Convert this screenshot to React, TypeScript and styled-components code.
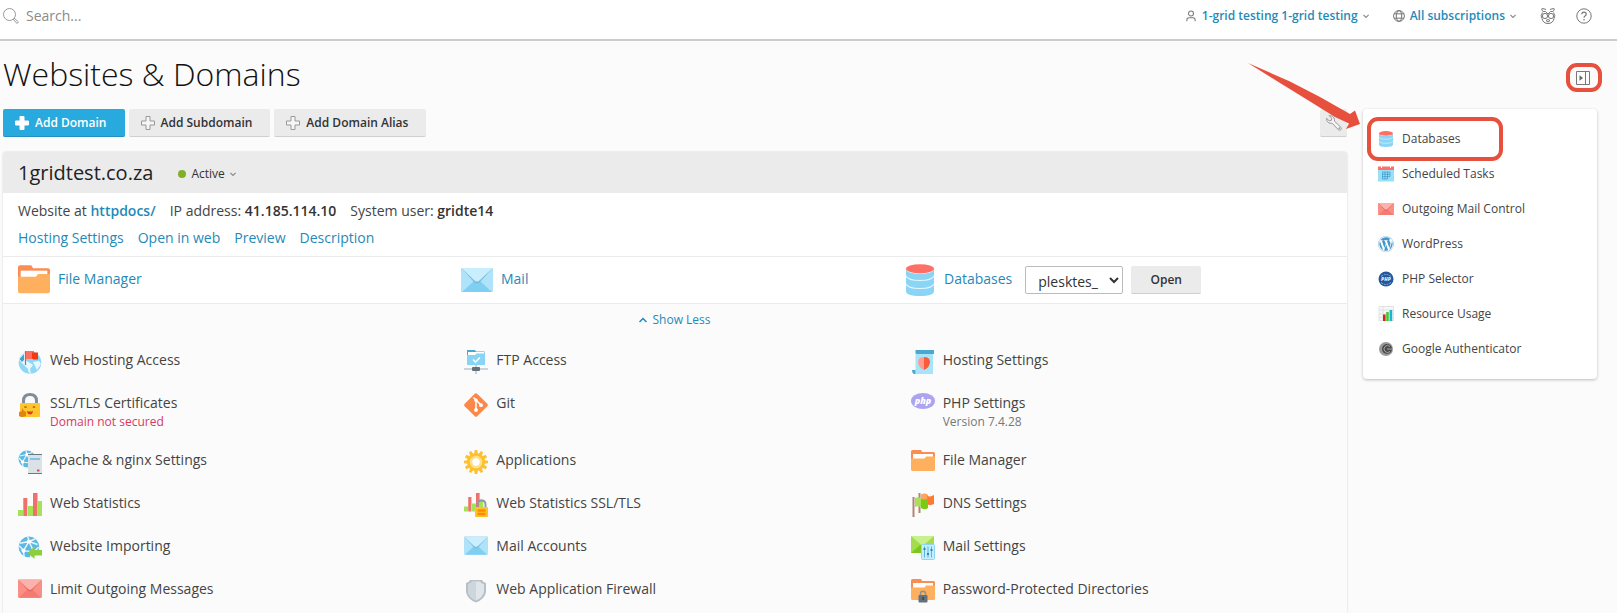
import React from "react";
import styled, { createGlobalStyle } from "styled-components";
import { FaWordpress } from "react-icons/fa";

const GlobalStyle = createGlobalStyle`
  * { box-sizing: border-box; }
  body {
    margin: 0;
    background: #fbfbfb;
    color: #444;
    font: 14px/20px "Open Sans", "Noto Sans", sans-serif;
  }
  button, input, select { font-family: inherit; }
  svg { display: block; flex: none; }
`;

const LINK = "#1f8ab8";
const RED = "#e6503c";

/* ---------- layout ---------- */

const Page = styled.div`
  display: flex;
  flex-direction: column;
  min-height: 100vh;
  overflow: hidden;
`;

const TopBar = styled.header`
  display: flex;
  align-items: center;
  justify-content: space-between;
  height: 41px;
  padding: 0 25px 8px 3px;
  background: #fff;
  border-bottom: 2px solid #ccc;
`;

const Search = styled.label`
  display: flex;
  align-items: center;
  gap: 7px;
`;

const SearchInput = styled.input`
  width: 200px;
  height: 24px;
  padding: 0;
  border: 0;
  outline: 0;
  background: transparent;
  font-size: 14px;
  color: #444;
  &::placeholder { color: #8a8a8a; opacity: 1; }
`;

const TopMenu = styled.nav`
  display: flex;
  align-items: center;
  gap: 24px;
`;

const TopLink = styled.a`
  display: flex;
  align-items: center;
  gap: 5px;
  color: ${LINK};
  font-size: 12px;
  font-weight: 600;
  text-decoration: none;
`;

const TopTools = styled.div`
  display: flex;
  gap: 20px;
`;

const PlainButton = styled.button`
  display: flex;
  align-items: center;
  justify-content: center;
  padding: 0;
  border: 0;
  background: transparent;
  cursor: pointer;
`;

const Content = styled.div`
  display: flex;
  flex: 1;
  flex-direction: column;
  padding: 0 20px 0 3px;
`;

const TitleRow = styled.div`
  display: flex;
  align-items: flex-start;
  justify-content: space-between;
  height: 68px;
  padding-top: 11px;
`;

const Title = styled.h1`
  margin: 0;
  color: #111;
  font-size: 32px;
  font-weight: 300;
  line-height: 44px;
`;

const ToggleWrap = styled.div`
  position: relative;
  padding-top: 12px;
`;

const ToggleButton = styled(PlainButton)`
  width: 28px;
  height: 28px;
`;

const Columns = styled.div`
  display: grid;
  flex: 1;
  grid-template-columns: minmax(0, 1fr) 234px;
  gap: 16px;
`;

const Main = styled.main`
  display: flex;
  flex-direction: column;
  gap: 15px;
`;

const Toolbar = styled.div`
  display: flex;
  gap: 4px;
`;

const ToolButton = styled.button<{ $primary?: boolean }>`
  display: flex;
  align-items: center;
  gap: 5px;
  height: 28px;
  padding: 0 18px 0 11px;
  border: 0;
  border-bottom: 1px solid ${(p) => (p.$primary ? "#2391bf" : "#cfcfcf")};
  border-radius: 2px;
  background: ${(p) => (p.$primary ? "#28aade" : "#ebebeb")};
  color: ${(p) => (p.$primary ? "#fff" : "#333")};
  font-size: 12px;
  font-weight: 600;
  cursor: pointer;
`;

const WrenchButton = styled(ToolButton)`
  width: 27px;
  margin-left: auto;
  padding: 0;
  justify-content: center;
`;

const Panel = styled.section`
  flex: 1;
  border-radius: 3px 3px 0 0;
  background: #fbfbfb;
  box-shadow: 0 0 2px rgba(0, 0, 0, 0.2);
`;

const PanelHead = styled.div`
  display: flex;
  align-items: center;
  gap: 25px;
  height: 41px;
  padding: 0 15px;
  border-radius: 3px 3px 0 0;
  background: #ebebeb;
`;

const DomainName = styled.h2`
  margin: 0;
  color: #222;
  font-size: 20px;
  font-weight: 500;
  line-height: 28px;
`;

const Status = styled(PlainButton)`
  gap: 5px;
  padding-top: 2px;
  color: #333;
  font-size: 12px;
  font-weight: 500;
`;

const Dot = styled.span`
  width: 8px;
  height: 8px;
  border-radius: 50%;
  background: #7fb02a;
`;

const Info = styled.div`
  display: flex;
  flex-direction: column;
  gap: 7px;
  padding: 8px 15px;
  border-bottom: 1px solid #ebebeb;
  background: #fff;
`;

const InfoRow = styled.div`
  display: flex;
  gap: 14px;
  strong { color: #333; font-weight: 600; }
`;

const Link = styled.a<{ $strong?: boolean }>`
  color: ${LINK};
  font-weight: ${(p) => (p.$strong ? 600 : 400)};
  text-decoration: none;
`;

const Shortcuts = styled.div`
  display: grid;
  grid-template-columns: repeat(3, minmax(0, 1fr));
  column-gap: 15px;
  align-items: center;
  height: 47px;
  padding: 0 15px;
  border-bottom: 1px solid #ebebeb;
  background: #fff;
`;

const Shortcut = styled.div`
  display: flex;
  align-items: center;
  gap: 8px;
  ${Link} { padding-bottom: 2px; }
`;

const DbSelect = styled.select`
  width: 98px;
  height: 28px;
  margin-left: 5px;
  padding: 2px 0 0 8px;
  border: 1px solid #bbb;
  border-radius: 2px;
  background-color: #fff;
  color: #333;
  font-size: 14px;
`;

const OpenButton = styled(ToolButton)`
  width: 70px;
  padding: 0;
  justify-content: center;
`;

const ShowLess = styled(PlainButton)`
  gap: 5px;
  width: 100%;
  padding: 6px 0 20px;
  color: ${LINK};
  font-size: 12px;
  line-height: 20px;
`;

const Tools = styled.div`
  display: grid;
  grid-template-columns: repeat(3, minmax(0, 1fr));
  gap: 19px 25px;
  padding: 0 15px;
`;

const Tool = styled.a`
  display: flex;
  align-items: flex-start;
  gap: 8px;
  min-height: 24px;
  color: #444;
  text-decoration: none;
`;

const Note = styled.small<{ $warn?: boolean }>`
  display: block;
  color: ${(p) => (p.$warn ? "#d9385f" : "#777")};
  font-size: 12px;
  line-height: 18px;
`;

const Side = styled.aside`
  position: relative;
  align-self: start;
  padding: 12px 15px 13px;
  border-radius: 4px;
  background: #fff;
  box-shadow: 0 1px 3px rgba(0, 0, 0, 0.25);
`;

const SideLink = styled.a`
  display: flex;
  align-items: center;
  gap: 8px;
  height: 35px;
  color: #444;
  font-size: 12px;
  text-decoration: none;
`;

const Ring = styled.span`
  position: absolute;
  border: 4px solid ${RED};
  border-radius: 11px;
  pointer-events: none;
`;

const ToggleRing = styled(Ring)`
  inset: 11px -5px 0 -3px;
`;

const DatabaseRing = styled(Ring)`
  top: 8px;
  left: 4px;
  width: 136px;
  height: 44px;
`;

const ArrowSvg = styled.svg`
  position: absolute;
  top: -46px;
  left: -115px;
  pointer-events: none;
`;

/* ---------- icons ---------- */

const Chevron = ({ up, color = "#888", size = 6 }: { up?: boolean; color?: string; size?: number }) => (
  <svg width={size} height={size} viewBox="0 0 8 8" fill="none" stroke={color} strokeWidth="1.5">
    <path d={up ? "M.5 6 4 2.500 7.500 6" : "M.5 2.500 4 6 7.500 2.500"} />
  </svg>
);

const Plus = ({ solid }: { solid?: boolean }) => (
  <svg width="16" height="16" viewBox="0 0 16 16" fill={solid ? "#fff" : "#f6f6f6"} stroke={solid ? "#fff" : "#999"}>
    <path d="M6 1.500h4V6h4.500v4H10v4.500H6V10H1.500V6H6z" />
  </svg>
);

const SearchIcon = () => (
  <svg width="16" height="16" viewBox="0 0 16 16" fill="none" stroke="#999">
    <circle cx="6.500" cy="6.500" r="6" />
    <path d="m11 10 4.500 4-1.500 1.500-4-4.500" />
  </svg>
);

const UserIcon = () => (
  <svg width="12" height="12" viewBox="0 0 12 14" fill="none" stroke="#777" strokeWidth="1.200">
    <circle cx="6" cy="4" r="2.900" />
    <path d="M1.200 13v-1.500q0-2.500 2.500-2.500h4.600q2.500 0 2.500 2.500V13" />
  </svg>
);

const GlobeIcon = () => (
  <svg width="12" height="12" viewBox="0 0 12 12" fill="none" stroke="#777">
    <circle cx="6" cy="6" r="5.400" />
    <ellipse cx="6" cy="6" rx="2.700" ry="5.400" />
    <path d="M1 3.800h10M1 8.200h10" />
  </svg>
);

const MascotIcon = () => (
  <svg width="16" height="16" viewBox="0 0 16 16" fill="none" stroke="#777">
    <path d="M6 1.500Q2 0 1.800.8q-.3 2 1.400 2.700h2.300L8 6l2.500-2.500h2.300q1.700-.7 1.400-2.700Q14 0 10 1.500" />
    <path d="M2.500 4.500Q0 8 2 10.500q1 5 6 5t6-5q2-2.500-.5-6" />
    <circle cx="5" cy="8" r="2.600" />
    <circle cx="11" cy="8" r="2.600" />
    <path d="M6 12.500q2-2 4 0l-2 1.500z" />
  </svg>
);

const HelpIcon = () => (
  <svg width="16" height="16" viewBox="0 0 16 16" fill="none" stroke="#777">
    <circle cx="8" cy="8" r="7.200" />
    <path d="M5.800 6.300q0-2.200 2.200-2.200t2.200 2Q10.200 7.300 9 8q-1 .6-1 1.700M8 11v1.400" strokeWidth="1.200" />
  </svg>
);

const SidebarIcon = () => (
  <svg width="14" height="14" viewBox="0 0 14 14" fill="none" stroke="#777">
    <path d="M.5.5h13v13H.5zM9.500.5v13" />
    <path d="M3.500 4.300 7 7 3.500 9.700z" fill="#666" stroke="none" />
  </svg>
);

const WrenchIcon = () => (
  <svg width="16" height="16" viewBox="0 0 16 16" fill="#f4f4f4" stroke="#999">
    <path d="M3.200.7 5.700 3.200 5.300 5.400 3.200 5.800.6 3.300C.2 6 2 8.300 4.800 8.300h1.400l6.300 6.600c1.600 1.200 3.700-.7 2.500-2.500L8.500 6.200V4.800C8.300 2 6 .3 3.200.7z" />
    <circle cx="13.300" cy="13.300" r=".6" />
  </svg>
);

type IconProps = { size?: number };

const Folder = ({ size = 24, locked }: IconProps & { locked?: boolean }) => (
  <svg width={size} height={size} viewBox={size > 24 ? "0 -1 24 24" : "0 0 24 24"}>
    <path d="M0 1.500Q0 0 1.500 0h8q1 0 1.300 1.200l.4.900H22.500Q24 2.100 24 3.600V10H0z" fill="#fb8c53" />
    <path d="M2 4h20v5H2z" fill="#fff" />
    <path d="M0 8.500h13.500l1.500-2h9v13q0 1.500-1.500 1.500h-21Q0 21 0 19.500z" fill="#ffb05e" />
    {locked && (
      <g>
        <path d="M9.500 17v-2.200q0-2.500 2.500-2.500t2.500 2.500V17" fill="none" stroke="#8a9298" strokeWidth="1.500" />
        <rect x="7.500" y="16" width="9" height="7.500" rx="1" fill="#65717a" />
        <rect x="11.400" y="18" width="1.300" height="3" fill="#343c42" />
      </g>
    )}
  </svg>
);

const Envelope = ({ size = 24, red }: IconProps & { red?: boolean }) => (
  <svg width={size} height={size} viewBox={size === 24 ? "0 -1 32 32" : "0 -4 32 32"}>
    <rect width="32" height="24" rx="1" fill={red ? "#fa8f85" : "#aee3fa"} />
    <path d="M1 24 13 13h6l12 11z" fill={red ? "#f37b72" : "#7fcff2"} />
    <path d="M.5 0h31L19 14q-3 3-6 0z" fill={red ? "#e8635b" : "#79bcd9"} />
    <path d="M.5 0h31L19 12q-3 3-6 0z" fill={red ? "#fcb2ac" : "#c9eefe"} />
  </svg>
);

const Database = ({ size = 32 }: IconProps) => (
  <svg width={size} height={size} viewBox="0 0 32 32">
    <path d="M2 5v22q0 5 14 5t14-5V5z" fill="#8ad5f6" />
    <path d="M2 12q2 4.500 14 4.500T30 12M2 20q2 4.500 14 4.500T30 20" fill="none" stroke="#e2f6ff" strokeWidth="1.200" />
    <ellipse cx="16" cy="5" rx="14" ry="5" fill="#fff" />
    <ellipse cx="16" cy="4.800" rx="14" ry="4.600" fill="#ff6f66" />
  </svg>
);

const Web = () => (
  <g fill="none" stroke="#e6f6fd" strokeWidth="1.200">
    <circle cx="9" cy="9" r="8.500" fill="#5cb8e4" stroke="none" />
    <path d="M9 4.500 4.500 12 13 13zM9 4.500 8 .5M9 4.500l5-2M4.500 12 1 8M4.500 12 5 17M13 13l4-4M13 13l-3 4.500M1.500 6 9 4.500 16 7" />
    <g fill="#fff" stroke="none">
      <circle cx="9" cy="4.500" r="1.700" />
      <circle cx="4.500" cy="12" r="1.700" />
      <circle cx="13" cy="13" r="1.700" />
    </g>
  </g>
);

const HostingAccess = () => (
  <svg width="24" height="24" viewBox="0 0 24 24">
    <circle cx="12" cy="12.500" r="11.300" fill="#8ed7f7" />
    <path d="M1 10q2-6 7-8l1 5-2 3 5 3 3 2-3 4 1 5q-3-1-3-5l-4-4z" fill="#e9f8fe" />
    <path d="M1.500 9 6 4v6l-2 2z" fill="#4a9fc8" />
    <path d="m15 12 6-1 2 3-4 6-2-4z" fill="#e9f8fe" />
    <path d="M7.500 1v14" stroke="#a7705f" strokeWidth="1.200" />
    <path d="M8 1h8v8H8z" fill="#ff6f61" />
    <path d="M14 2.500h6V9.500h-5l-1-1.500z" fill="#f2390f" />
  </svg>
);

const Lock = () => (
  <svg width="24" height="24" viewBox="0 0 24 24">
    <path d="M5.500 11V8q0-6.500 6.500-6.500T18.500 8v3" fill="none" stroke="#7f8e99" strokeWidth="3" />
    <rect x="2" y="10" width="20" height="14" rx="1" fill="#ffc52b" />
    <path d="M6.500 14.500q1-1.500 2 0M15 14.500q1-1.500 2 0" fill="none" stroke="#7b4a12" strokeWidth="1.200" />
    <path d="M9 18q3 1 6 0-.5 3.500-3 3.500T9 18z" fill="#dc3c2a" />
    <path d="m4 15 2 3 2 1v4q-4 2-7 0v-4l3-1z" fill="#e08610" />
  </svg>
);

const Apache = () => (
  <svg width="24" height="24" viewBox="0 0 24 24">
    <Web />
    <rect x="10" y="4" width="14" height="20" fill="#dbe2e7" />
    <path d="M10 4.500h14M10 23.500h14" stroke="#6c7983" />
    <path d="M12 9h10" stroke="#52b2df" strokeWidth="1.300" />
    <path d="M19 20.500h2.500" stroke="#f0463c" strokeWidth="2" />
  </svg>
);

const Bars = ({ locked }: { locked?: boolean }) => (
  <svg width="24" height="24" viewBox="0 0 24 24">
    <g transform={locked ? "scale(.8)" : undefined}>
      <path d="M0 17h5v6H0zM10 13h5v10h-5zM20 8h4v15h-4z" fill="#a6e255" />
      <path d="M5.300 5h4v18h-4zM15 0h4.500v23H15z" fill="#ee716b" />
    </g>
    {locked && (
      <g>
        <path d="M13.500 15v-3.500q0-4 4-4t4 4V15" fill="none" stroke="#8b9ba5" strokeWidth="2" />
        <rect x="11" y="14" width="13" height="10" rx="1" fill="#ffc02b" />
        <path d="M13.500 17.500h8M13.500 21h8" stroke="#ff8a00" strokeWidth="2.600" />
      </g>
    )}
  </svg>
);

const Importing = () => (
  <svg width="24" height="24" viewBox="0 0 24 24">
    <g transform="scale(1.22)">
      <Web />
    </g>
    <path d="m10 16.500 6.500-6v3.500H24v5.500h-7.500v3.500z" fill="#8cce3c" />
  </svg>
);

const Ftp = () => (
  <svg width="24" height="24" viewBox="0 0 24 24">
    <path d="M3 0h8l1 1.500h8.500V6H3z" fill="#4ba7d2" />
    <path d="M4 2h16v4H4z" fill="#fff" />
    <path d="M3 5h8l1.500-1.500h8.500V15H3z" fill="#86d4f6" />
    <path d="m9 9.500 2.500 2.500L16 7.500" fill="none" stroke="#fff" strokeWidth="1.600" />
    <path d="M0 19h24M12 15v9" stroke="#bcc8cf" strokeWidth="1.600" />
    <rect x="8" y="17" width="8" height="4" rx="1" fill="#63727d" />
  </svg>
);

const Git = () => (
  <svg width="24" height="24" viewBox="0 0 24 24">
    <path d="M10.800.7q1.200-1 2.400 0L23.300 10.800q1 1.200 0 2.400L13.200 23.300q-1.200 1-2.400 0L.7 13.200q-1-1.200 0-2.400z" fill="#fb8849" />
    <path d="M9.500 4.500 12 7v10M12 7l5.500 5.500" fill="none" stroke="#fff" strokeWidth="1.500" />
    <circle cx="12" cy="7.200" r="1.700" fill="#fff" />
    <circle cx="12" cy="17" r="1.900" fill="#fff" />
    <circle cx="17" cy="12.200" r="1.900" fill="#fff" />
  </svg>
);

const Gear = () => (
  <svg width="24" height="24" viewBox="0 0 24 24">
    <g fill="#fdc02f">
      {Array.from({ length: 12 }, (_, i) => (
        <path key={i} d="m10.200 4 .5-4h2.600l.5 4z" transform={`rotate(${i * 30} 12 12)`} />
      ))}
      <circle cx="12" cy="12" r="9" />
    </g>
    <circle cx="12" cy="12" r="5" fill="#fff" stroke="#ffe18a" strokeWidth="2.600" />
  </svg>
);

const Shield = () => (
  <svg width="24" height="24" viewBox="0 0 24 24">
    <path d="M2 4q3-.5 4-3h12q1 2.500 4 3v9q-1 7-10 10.500Q3 20 2 13z" fill="#b7c0c6" />
    <path d="M4 5.300Q7 4.500 8 2.500h8q1 2 4 2.800v7.200q-1 6-8 9-7-3-8-9z" fill="#dfe5e9" />
    <path d="M12 2.500H8Q7 4.500 4 5.300v7.200q1 6 8 9z" fill="#cdd6db" />
  </svg>
);

const Scroll = () => (
  <svg width="24" height="24" viewBox="0 0 24 24">
    <path d="M4.500 2h17.500v22H4.500z" fill="#a6e4fb" />
    <path d="M4.500 0H23v4H5.500Q4 3 4.500 0zM1 20h3.500v4H3Q1 23 1 20z" fill="#4ba7cf" />
    <path d="M13 7Q7 7 7 12q0 5 6 8z" fill="#ff9c8e" />
    <path d="M13 7q6 0 6 5 0 5-6 8z" fill="#fb5b38" />
  </svg>
);

const Php = () => (
  <svg width="24" height="24" viewBox="0 0 24 24">
    <ellipse cx="12" cy="8" rx="12" ry="8" fill="#aca4ee" />
    <text x="12" y="10.500" textAnchor="middle" fontSize="9" fontWeight="800" fontStyle="italic" fill="#fff">
      php
    </text>
  </svg>
);

const Flags = () => (
  <svg width="24" height="24" viewBox="0 0 24 24">
    <path d="M8.500 0v20M2.500 4v20" stroke="#b28472" strokeWidth="2" />
    <path d="M10 1.500q4-2 7 .5v8h-7z" fill="#ffa45e" />
    <path d="M16 2.500q3 2 7-.5v9q-4 2-6 .5z" fill="#ff7a30" />
    <path d="M4 5q4-2 7 1v9q-3-3-7-1z" fill="#a8e05a" />
    <path d="M10 6q3 1 7-.5V15q-3 2.500-7 0z" fill="#7bcb16" />
  </svg>
);

const MailSettings = () => (
  <svg width="24" height="24" viewBox="0 0 24 24">
    <path d="M0 0h23v17H0z" fill="#a3dc4f" />
    <path d="M0 17 9 9h5l9 8z" fill="#7cc91c" />
    <path d="M0 0h23L11.500 10z" fill="#c8f08c" />
    <rect x="10.500" y="8.500" width="13" height="15" rx="1" fill="#c4edfd" stroke="#8fd6f5" />
    <path d="M13.500 10.500v11M17 10.500v11M20.500 10.500v11" stroke="#5fb4dc" />
    <path d="M12.500 13h2M16 18h2M19.500 14h2" stroke="#2f86b4" strokeWidth="1.800" />
  </svg>
);

const Calendar = () => (
  <svg width="16" height="16" viewBox="0 0 16 16">
    <path d="M0 1h16v14.500H0z" fill="#98dff8" />
    <path d="M0 .5h16V4H0z" fill="#ff6f66" />
    <path d="M3.500 0v2M12.500 0v2" stroke="#fff" />
    <path d="M4.500 6v7M7 6v7M9.500 6v7M12 6v4.500M4.500 6H12M4.500 8.300H12M4.500 10.600H12M4.500 13h5" fill="none" stroke="#3c96c4" strokeWidth=".7" />
  </svg>
);

const PhpSelector = () => (
  <svg width="16" height="16" viewBox="0 0 16 16">
    <circle cx="8" cy="8" r="7.500" fill="#25579c" />
    <path d="M3 5.500q5-4 10 0M3 11.500q5 4 10 0" fill="none" stroke="#89aed8" strokeDasharray="2 1" />
    <text x="8" y="10" textAnchor="middle" fontSize="5" fontWeight="800" fontStyle="italic" fill="#dbe7f6">
      PHP
    </text>
  </svg>
);

const Resource = () => (
  <svg width="16" height="16" viewBox="0 0 16 16">
    <path d="M1 .5h14.500v14H1zM1 4h14M1 8h14M1 11.500h14M5 0v15" fill="#f7f7f7" stroke="#e2e2e2" />
    <path d="M5 8.500h2.600V15H5z" fill="#dc2020" />
    <path d="M8.200 6h2.600v9H8.200z" fill="#45c832" />
    <path d="M11.600 4h2.600v11h-2.600z" fill="#18b4d4" />
  </svg>
);

const Authenticator = () => (
  <svg width="16" height="16" viewBox="0 0 16 16">
    <circle cx="8" cy="8" r="7" fill="#9a9a9a" />
    <circle cx="9" cy="8" r="5" fill="#4a4a4a" />
    <path d="M12 5.500a3.500 3.500 0 1 0 0 5M9 8h5.500" fill="none" stroke="#a9a9a9" />
  </svg>
);

/* ---------- data ---------- */

type ToolItem = { label: string; icon: React.ReactNode; note?: string; warn?: boolean };

const tools: ToolItem[] = [
  { label: "Web Hosting Access", icon: <HostingAccess /> },
  { label: "FTP Access", icon: <Ftp /> },
  { label: "Hosting Settings", icon: <Scroll /> },
  { label: "SSL/TLS Certificates", icon: <Lock />, note: "Domain not secured", warn: true },
  { label: "Git", icon: <Git /> },
  { label: "PHP Settings", icon: <Php />, note: "Version 7.4.28" },
  { label: "Apache & nginx Settings", icon: <Apache /> },
  { label: "Applications", icon: <Gear /> },
  { label: "File Manager", icon: <Folder /> },
  { label: "Web Statistics", icon: <Bars /> },
  { label: "Web Statistics SSL/TLS", icon: <Bars locked /> },
  { label: "DNS Settings", icon: <Flags /> },
  { label: "Website Importing", icon: <Importing /> },
  { label: "Mail Accounts", icon: <Envelope /> },
  { label: "Mail Settings", icon: <MailSettings /> },
  { label: "Limit Outgoing Messages", icon: <Envelope red /> },
  { label: "Web Application Firewall", icon: <Shield /> },
  { label: "Password-Protected Directories", icon: <Folder locked /> },
];

const sideLinks: ToolItem[] = [
  { label: "Databases", icon: <Database size={16} /> },
  { label: "Scheduled Tasks", icon: <Calendar /> },
  { label: "Outgoing Mail Control", icon: <Envelope red size={16} /> },
  { label: "WordPress", icon: <FaWordpress size={16} color="#4698c6" /> },
  { label: "PHP Selector", icon: <PhpSelector /> },
  { label: "Resource Usage", icon: <Resource /> },
  { label: "Google Authenticator", icon: <Authenticator /> },
];

export default function App() {
  return (
    <Page>
      <GlobalStyle />
      <TopBar>
        <Search>
          <SearchIcon />
          <SearchInput type="text" placeholder="Search..." aria-label="Search" />
        </Search>
        <TopMenu>
          <TopLink href="#account">
            <UserIcon />
            1-grid testing 1-grid testing
            <Chevron />
          </TopLink>
          <TopLink href="#subscriptions">
            <GlobeIcon />
            All subscriptions
            <Chevron />
          </TopLink>
          <TopTools>
            <PlainButton aria-label="Advisor"><MascotIcon /></PlainButton>
            <PlainButton aria-label="Help"><HelpIcon /></PlainButton>
          </TopTools>
        </TopMenu>
      </TopBar>

      <Content>
        <TitleRow>
          <Title>Websites &amp; Domains</Title>
          <ToggleWrap>
            <ToggleButton aria-label="Toggle sidebar"><SidebarIcon /></ToggleButton>
            <ToggleRing />
          </ToggleWrap>
        </TitleRow>

        <Columns>
          <Main>
            <Toolbar>
              <ToolButton $primary><Plus solid />Add Domain</ToolButton>
              <ToolButton><Plus />Add Subdomain</ToolButton>
              <ToolButton><Plus />Add Domain Alias</ToolButton>
              <WrenchButton aria-label="Settings"><WrenchIcon /></WrenchButton>
            </Toolbar>

            <Panel>
              <PanelHead>
                <DomainName>1gridtest.co.za</DomainName>
                <Status><Dot />Active <Chevron /></Status>
              </PanelHead>
              <Info>
                <InfoRow>
                  <span>Website at <Link $strong href="#httpdocs">httpdocs/</Link></span>
                  <span>IP address: <strong>41.185.114.10</strong></span>
                  <span>System user: <strong>gridte14</strong></span>
                </InfoRow>
                <InfoRow>
                  <Link href="#hosting">Hosting Settings</Link>
                  <Link href="#open">Open in web</Link>
                  <Link href="#preview">Preview</Link>
                  <Link href="#description">Description</Link>
                </InfoRow>
              </Info>
              <Shortcuts>
                <Shortcut><Folder size={32} /><Link href="#files">File Manager</Link></Shortcut>
                <Shortcut><Envelope size={32} /><Link href="#mail">Mail</Link></Shortcut>
                <Shortcut>
                  <Database />
                  <Link href="#databases">Databases</Link>
                  <DbSelect aria-label="Database" defaultValue="plesktes_">
                    <option>plesktes_</option>
                  </DbSelect>
                  <OpenButton>Open</OpenButton>
                </Shortcut>
              </Shortcuts>
              <ShowLess><Chevron up color={LINK} size={8} />Show Less</ShowLess>
              <Tools>
                {tools.map((t) => (
                  <Tool key={t.label} href="#tool">
                    {t.icon}
                    <span>
                      {t.label}
                      {t.note && <Note $warn={t.warn}>{t.note}</Note>}
                    </span>
                  </Tool>
                ))}
              </Tools>
            </Panel>
          </Main>

          <Side>
            {sideLinks.map((s) => (
              <SideLink key={s.label} href="#side">
                {s.icon}
                {s.label}
              </SideLink>
            ))}
            <DatabaseRing />
            <ArrowSvg width="114" height="70" viewBox="0 0 114 70">
              <path d="M0 0 42 18.500 72 34 102 51 107 47.500 112 61 98 66 101 60.500 87 54 58 36 28 17.500z" fill={RED} />
            </ArrowSvg>
          </Side>
        </Columns>
      </Content>
    </Page>
  );
}
